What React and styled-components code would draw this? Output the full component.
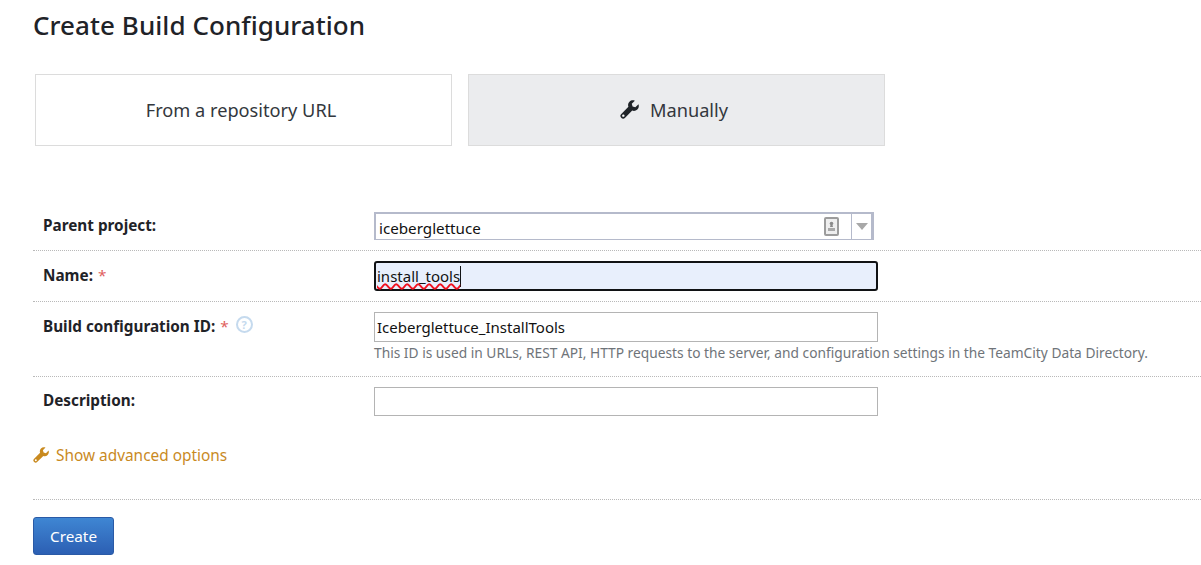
import React from 'react';
import styled, { createGlobalStyle } from 'styled-components';

const Global = createGlobalStyle`
  html, body { margin: 0; padding: 0; background: #fff; }
  body {
    font-family: "Noto Sans", "Open Sans", "Liberation Sans", sans-serif;
    color: #1f2328;
    overflow: hidden;
  }
`;

const Page = styled.div`
  width: 1201px;
  height: 565px;
  padding-left: 33px;
  box-sizing: border-box;
  overflow: hidden;
`;

const Title = styled.h1`
  margin: 0;
  padding-top: 8px;
  height: 74px;
  box-sizing: border-box;
  font-size: 26px;
  line-height: 34px;
  font-weight: 500;
  letter-spacing: 0.06px;
  color: #1f2328;
`;

const Tabs = styled.div`
  display: flex;
  gap: 16px;
  margin-left: 2px;
  margin-bottom: 56px;
`;

const Tab = styled.div`
  width: 417px;
  height: 72px;
  box-sizing: border-box;
  padding: 0 5px 1px 0;
  border: 1px solid #dcdcdc;
  background: ${(p) => (p.$active ? '#ebecee' : '#fff')};
  display: flex;
  align-items: center;
  justify-content: center;
  gap: 11px;
  font-size: 18.2px;
  color: #33373d;
`;

const Row = styled.div`
  display: flex;
  height: ${(p) => p.$height}px;
  box-sizing: border-box;
  padding-top: 10px;
  padding-left: 10px;
  border-bottom: ${(p) => (p.$last ? 'none' : '1px dotted #b9b9b9')};
`;

const Label = styled.div`
  width: 331px;
  flex: none;
  padding-top: ${(p) => p.$top}px;
  font-size: 15.3px;
  line-height: 20px;
  font-weight: 700;
  color: #1f2328;
  display: flex;
  align-items: flex-start;
  gap: 5px;
`;

const Required = styled.span`
  color: #e0605c;
  font-weight: 400;
`;

const Help = styled.span`
  width: 17px;
  height: 17px;
  margin: 0 0 0 2px;
  box-sizing: border-box;
  border: 2px solid #c5daee;
  border-radius: 50%;
  color: #c5daee;
  font-size: 11px;
  line-height: 13px;
  font-weight: 700;
  text-align: center;
`;

const Field = styled.div`
  width: 504px;
  height: ${(p) => p.$height || 30}px;
  box-sizing: border-box;
  border: 1px solid #b4b4b4;
  background: #fff;
  font-size: 15px;
  line-height: 28px;
  padding-left: 2px;
  color: #111;
`;

const NameField = styled(Field)`
  border: 2px solid #101214;
  border-radius: 3px;
  background: #e8effc;
  padding-left: 1px;
  line-height: 26px;
`;

const Misspelled = styled.span`
  display: inline-block;
  height: 21px;
  line-height: 21px;
  text-decoration: underline wavy #f0101e 1.5px;
  text-underline-offset: 1px;
  border-right: 1px solid #101214;
`;

const Select = styled.div`
  width: 500px;
  height: 28px;
  box-sizing: border-box;
  border-style: solid;
  border-color: #b5bacb;
  border-width: 2px 3px 1.5px 2px;
  display: flex;
  align-items: center;
  font-size: 15.2px;
  color: #111;
`;

const SelectText = styled.span`
  flex: 1;
  padding: 2px 0 0 3px;
`;

const SelectIcon = styled.svg`
  width: 15px;
  height: 19px;
  margin-right: 12px;
`;

const SelectArrow = styled.div`
  width: 19px;
  height: 100%;
  border-left: 1px solid #b5bacb;
  display: flex;
  align-items: center;
  justify-content: center;
  &::after {
    content: '';
    border-left: 6px solid transparent;
    border-right: 6px solid transparent;
    border-top: 7px solid #a8a8a8;
  }
`;

const Hint = styled.div`
  font-size: 13.75px;
  line-height: 18px;
  margin-top: 2px;
  color: #6f7479;
  white-space: nowrap;
`;

const Advanced = styled.div`
  display: flex;
  align-items: center;
  gap: 7px;
  margin-top: 26px;
  height: 24px;
  font-size: 15.4px;
  color: #c98a1f;
`;

const Footer = styled.div`
  margin-top: 32px;
  border-top: 1px dotted #b9b9b9;
  padding-top: 17px;
`;

const Button = styled.button`
  display: block;
  width: 81px;
  height: 38px;
  border: 1px solid #2a5aa6;
  border-radius: 3px;
  background: linear-gradient(#3f86d3, #2c5fb3);
  color: #fff;
  font: inherit;
  font-size: 15.3px;
  padding: 0;
`;

const Wrench = ({ color, size }) => (
  <svg width={size} height={size} viewBox="0 0 16 16" aria-hidden="true">
    <path
      fill={color}
      d="M15.6 3.6l-2.7 2.6-2.3-.7-.7-2.3L12.5.6c-1.5-.7-3.3-.4-4.5.8-1.2 1.2-1.5 2.9-.9 4.3L.9 11.9c-.8.8-.8 2.1 0 2.9l.3.3c.8.8 2.1.8 2.9 0l6.2-6.2c1.4.6 3.1.3 4.3-.9 1.2-1.2 1.5-3 1-4.4z"
    />
    <circle cx="2.8" cy="13.2" r="1" fill="#fff" />
  </svg>
);

const App = () => (
  <Page>
    <Global />
    <Title>Create Build Configuration</Title>
    <Tabs>
      <Tab>From a repository URL</Tab>
      <Tab $active>
        <Wrench color="#1f2328" size={19} />
        Manually
      </Tab>
    </Tabs>
    <Row $height={49}>
      <Label $top={3}>Parent project:</Label>
      <Select>
        <SelectText>iceberglettuce</SelectText>
        <SelectIcon viewBox="0 0 15 19">
          <rect x="1" y="1" width="13" height="17" rx="1" fill="#eeeeee" stroke="#9c9c9c" strokeWidth="2" />
          <circle cx="7.5" cy="6.5" r="1.8" fill="#8a8a8a" />
          <path d="M6.5 8h2l.5 2h-3z" fill="#8a8a8a" />
          <rect x="4" y="11" width="7" height="3" fill="#a8a8a8" />
        </SelectIcon>
        <SelectArrow />
      </Select>
    </Row>
    <Row $height={51}>
      <Label $top={4}>
        Name: <Required>*</Required>
      </Label>
      <NameField>
        <Misspelled>install_tools</Misspelled>
      </NameField>
    </Row>
    <Row $height={75}>
      <Label $top={4}>
        Build configuration ID: <Required>*</Required>
        <Help>?</Help>
      </Label>
      <div>
        <Field>Iceberglettuce_InstallTools</Field>
        <Hint>This ID is used in URLs, REST API, HTTP requests to the server, and configuration settings in the TeamCity Data Directory.</Hint>
      </div>
    </Row>
    <Row $height={40} $last>
      <Label $top={3}>Description:</Label>
      <Field $height={29} />
    </Row>
    <Advanced>
      <Wrench color="#c98a1f" size={16} />
      Show advanced options
    </Advanced>
    <Footer>
      <Button>Create</Button>
    </Footer>
  </Page>
);

export default App;
